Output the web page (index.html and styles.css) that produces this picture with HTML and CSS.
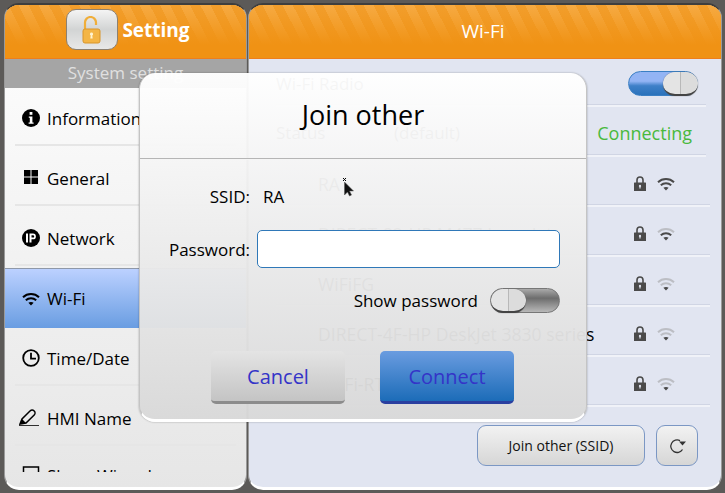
FILE: index.html
```html
<!DOCTYPE html>
<html lang="en">
<head>
<meta charset="utf-8">
<title>Setting - Wi-Fi</title>
<link rel="stylesheet" href="styles.css">
</head>
<body>
<svg class="defs" width="0" height="0" aria-hidden="true">
  <symbol id="wifi" viewBox="0 0 18 14">
    <path d="M1 5.200C5.600 1 12.400 1 17 5.200" fill="none" stroke="currentColor" stroke-width="2"/>
    <path d="M3.800 8.200C6.800 5.600 11.200 5.600 14.200 8.200" fill="none" stroke="currentColor" stroke-width="2"/>
    <path d="M9 13.400 6.400 10.700C7.900 9.700 10.100 9.700 11.600 10.700Z" fill="currentColor"/>
  </symbol>
  <symbol id="wifi2" viewBox="0 0 18 14">
    <path d="M1 5.200C5.600 1 12.400 1 17 5.200" fill="none" stroke="#bcbec4" stroke-width="2"/>
    <path d="M3.800 8.200C6.800 5.600 11.200 5.600 14.200 8.200" fill="none" stroke="#4a4a4a" stroke-width="2"/>
    <path d="M9 13.400 6.400 10.700C7.900 9.700 10.100 9.700 11.600 10.700Z" fill="#4a4a4a"/>
  </symbol>
  <symbol id="wifi1" viewBox="0 0 18 14">
    <path d="M1 5.200C5.600 1 12.400 1 17 5.200" fill="none" stroke="#bcbec4" stroke-width="2"/>
    <path d="M3.800 8.200C6.800 5.600 11.200 5.600 14.200 8.200" fill="none" stroke="#bcbec4" stroke-width="2"/>
    <path d="M9 13.400 6.400 10.700C7.900 9.700 10.100 9.700 11.600 10.700Z" fill="#4a4a4a"/>
  </symbol>
  <symbol id="lock" viewBox="0 0 12 15">
    <path d="M3 7V4a3 3 0 0 1 6 0v3" fill="none" stroke="currentColor" stroke-width="1.600"/>
    <path fill-rule="evenodd" d="M.5 6.500h11a.5.5 0 0 1 .5.5v7.500a.5.5 0 0 1-.5.5H.5a.5.5 0 0 1-.5-.5V7a.5.5 0 0 1 .5-.5ZM6 8.800a1.200 1.200 0 0 0-.6 2.200v1.600h1.200V11A1.200 1.200 0 0 0 6 8.800Z" fill="currentColor"/>
  </symbol>
</svg>
<main class="app">
  <section class="panel side">
    <header class="bar bar-side">
      <span class="lock-btn">
        <svg width="20" height="28" viewBox="0 0 20 28">
          <path d="M3 13V6.500a5.500 5.500 0 0 1 11 0V9" fill="none" stroke="#f0ae3a" stroke-width="2.200"/>
          <rect x="1" y="13" width="17" height="14" rx="2" fill="#f4b545" stroke="#d9952a"/>
          <path d="M9.500 16.500a1.600 1.600 0 0 0-.8 3l-.4 3h2.400l-.4-3a1.600 1.600 0 0 0-.8-3Z" fill="#fff3d0"/>
        </svg>
      </span>
      <h1 class="bar-title bold">Setting</h1>
    </header>
    <div class="subhead">System setting</div>
    <nav class="menu">
      <a class="item"><svg class="ico" viewBox="0 0 18 18"><circle cx="9" cy="9" r="9"/><rect x="7.600" y="3" width="2.800" height="2.800" fill="#fff"/><path d="M6.800 7.500h3.600v6h1.200v1.300H6.600v-1.300h1.200V8.800h-1Z" fill="#fff"/></svg>Information</a>
      <a class="item"><svg class="ico" viewBox="0 0 18 18"><rect x="2" y="1" width="6.500" height="6.500"/><rect x="9.500" y="1" width="6.500" height="6.500"/><rect x="2" y="8.500" width="6.500" height="6.500"/><rect x="9.500" y="8.500" width="6.500" height="6.500"/></svg>General</a>
      <a class="item"><svg class="ico" viewBox="0 0 18 18"><circle cx="9" cy="9" r="9"/><rect x="4" y="4.500" width="2" height="9" fill="#fff"/><path d="M7.500 13.500v-9H11a2.800 2.800 0 0 1 0 5.800H9.500v3.200Z M9.500 6.200v2.400H11a1.200 1.200 0 0 0 0-2.400Z" fill="#fff" fill-rule="evenodd"/></svg>Network</a>
      <a class="item item-on"><svg class="ico"><use href="#wifi"/></svg>Wi-Fi</a>
      <a class="item"><svg class="ico" viewBox="0 0 18 18"><circle cx="9" cy="9" r="7.800" fill="none" stroke="#000" stroke-width="1.800"/><path d="M9 3.800V9.600H14" fill="none" stroke="#000" stroke-width="1.800"/></svg>Time/Date</a>
      <a class="item"><svg class="ico ico-pen" viewBox="0 0 21 18"><path d="M1 15 3 10 11 2c1.300-1.300 3.200-1 4.200 0s1.200 2.800 0 4L7 14Z" fill="none" stroke="#000" stroke-width="1.500"/><path d="M1 15 3 10l4 4Z"/><path d="M0 16.500h20" stroke="#000" stroke-width=".8"/></svg>HMI Name</a>
      <a class="item item-last"><svg class="ico" viewBox="0 0 18 18"><rect x="1.500" y="1" width="15" height="15" fill="none" stroke="#000" stroke-width="1.500"/></svg>Share Wizard</a>
    </nav>
  </section>

  <section class="panel main">
    <header class="bar bar-main"><h2 class="bar-title">Wi-Fi</h2></header>
    <div class="rows">
      <div class="row row-first"><span class="row-name">Wi-Fi Radio</span><span class="toggle toggle-on"><i class="knob"></i></span></div>
      <div class="row row-second"><span class="row-name status">Status</span><span class="row-value">(default)</span><span class="connecting">Connecting</span></div>
      <div class="row net"><span class="row-ssid">RA</span><svg class="i-lock"><use href="#lock"/></svg><svg class="i-wifi"><use href="#wifi"/></svg></div>
      <div class="row net"><span class="row-ssid">DIRECT-82-HP M477 LaserJet</span><svg class="i-lock"><use href="#lock"/></svg><svg class="i-wifi"><use href="#wifi2"/></svg></div>
      <div class="row net"><span class="row-ssid">WiFiFG</span><svg class="i-lock"><use href="#lock"/></svg><svg class="i-wifi"><use href="#wifi1"/></svg></div>
      <div class="row net"><span class="row-ssid">DIRECT-4F-HP DeskJet 3830 series</span><svg class="i-lock"><use href="#lock"/></svg><svg class="i-wifi"><use href="#wifi1"/></svg></div>
      <div class="row net"><span class="row-ssid">Wi-Fi-RT</span><svg class="i-lock"><use href="#lock"/></svg><svg class="i-wifi"><use href="#wifi1"/></svg></div>
    </div>
    <footer class="actions">
      <button class="btn-join">Join other (SSID)</button>
      <button class="btn-refresh" aria-label="Refresh">
        <svg width="18" height="18" viewBox="0 0 18 18"><path d="M14.500 12.500A6.300 6.300 0 1 1 12 3.600" fill="none" stroke="#333" stroke-width="1.300"/><path d="M11 4.500h7l-3.500 4Z" fill="#333"/></svg>
      </button>
    </footer>
  </section>
</main>

<div class="modal" role="dialog">
  <h3 class="modal-title">Join other</h3>
  <div class="modal-body">
    <div class="field field-ssid"><span class="lab">SSID:</span><span class="val">RA</span></div>
    <div class="field field-pass"><span class="lab lab-pass">Password:</span><input class="pass" type="password"></div>
    <div class="show"><span>Show password</span><span class="toggle toggle-off"><i class="knob"></i></span></div>
    <div class="modal-btns">
      <button class="mbtn mbtn-cancel">Cancel</button>
      <button class="mbtn mbtn-connect">Connect</button>
    </div>
  </div>
</div>

<svg class="cursor" width="14" height="20" viewBox="0 0 14 20" aria-hidden="true">
  <path d="M2 1 5 4M5 1 2 4" stroke="#000" stroke-width="1"/>
  <path d="M3.500 5v13l3-3 2 4 2-1-2-4h4Z" fill="#111" stroke="#555" stroke-width=".5"/>
</svg>
</body>
</html>
```
FILE: styles.css
```css
* { box-sizing: border-box; }
html, body { margin: 0; height: 100%; }
body {
  width: 725px;
  height: 493px;
  overflow: hidden;
  position: relative;
  background: #5c5a58;
  font-family: "Open Sans", "Noto Sans", sans-serif;
  color: #000;
}
.defs { position: absolute; }
.app {
  display: flex;
  gap: 1px;
  height: 100%;
  padding: 3px 3px 3px 4px;
}
.panel {
  display: flex;
  flex-direction: column;
  border-radius: 15px;
  overflow: hidden;
  border-top: 2px solid #3e3e3e;
  border-bottom: 3px solid #fff;
  border-left: 1px solid #9a9a9a;
  border-right: 1px solid #9a9a9a;
}
.side { width: 243px; background: linear-gradient(#fff, #e6e6e6); }
.main { flex: 1; background: #e1e5f1; }
.bar {
  height: 54px;
  flex: none;
  display: flex;
  align-items: center;
  justify-content: center;
  gap: 4px;
  color: #fff;
  border-bottom: 1px solid #ee7f1c;
  background:
    linear-gradient(rgba(240,146,20,0) 0, #f09214 40px),
    repeating-linear-gradient(63deg, #f6aa42 0 9px, #f29e2c 9px 18px);
  background-color: #f09214;
}
.bar-side { padding: 0 0 4px 5px; }
.bar-main { padding: 0 4px 2px 0; }
.bar-title { margin: 0; font-size: 19px; line-height: 26px; font-weight: 400; }
.bold { font-weight: 700; }
.lock-btn {
  width: 52px;
  height: 41px;
  display: flex;
  align-items: center;
  justify-content: center;
  border-radius: 10px;
  border: 1px solid #8d8171;
  background: linear-gradient(#f4f4f4, #d2d4d4 50%, #e8e8e8);
}
.subhead {
  height: 29px;
  flex: none;
  text-align: center;
  line-height: 28px;
  font-size: 17px;
  color: #e0e0e0;
  background: #a5a5a5;
}
.menu { display: flex; flex-direction: column; height: 384px; flex: none; overflow: hidden; }
.item {
  position: relative;
  flex: none;
  height: 60px;
  padding-left: 17px;
  display: flex;
  align-items: center;
  gap: 7px;
  font-size: 17px;
}
.item::after {
  content: "";
  position: absolute;
  left: 10px;
  right: 10px;
  bottom: 2px;
  height: 2px;
  background: #e6e6e6;
}
.ico { width: 18px; height: 18px; flex: none; color: #000; }
.ico-pen { width: 21px; margin-left: -3px; }
.item-on {
  border-top: 1px solid #8f98a8;
  background: linear-gradient(#bcd1ff, #699de2);
}
.item-on::after { display: none; }
.item-last { margin-top: -3px; }
.rows { display: flex; flex-direction: column; padding-right: 11px; flex: none; }
.row {
  height: 50px;
  margin-left: 27px;
  padding-top: 5px;
  display: flex;
  align-items: center;
  font-size: 17px;
  border-bottom: 2px solid #f0f2f8;
  box-shadow: inset 0 -1px 0 #d0d5e4;
  flex: none;
}
.row-first { height: 48px; margin-right: 4px; padding-top: 2px; }
.row-second { margin-right: 4px; padding-top: 3px; }
.row-name { flex: none; width: 118px; }
.row-value { flex: 1; }
.connecting { color: #49b93d; font-size: 18px; margin-right: 14px; }
.toggle {
  display: block;
  position: relative;
  width: 70px;
  height: 25px;
  border-radius: 13px;
  flex: none;
}
.row-first .toggle { margin-left: auto; margin-right: 8px; }
.toggle-on { background: linear-gradient(#93b4f4 0 40%, #3f80c8 60%, #2a72bb); border: 1px solid #3a7fc4; }
.toggle-off { background: linear-gradient(#aaa, #6d6d6d 40%, #b8b8b8); border: 1px solid #777; }
.knob {
  position: absolute;
  top: 0;
  bottom: -1px;
  width: 35px;
  border-radius: 13px;
  background: linear-gradient(90deg, #e4e4e4 49%, #b8b8b8 49%, #b8b8b8 51%, #dcdcdc 51%);
  border-bottom: 2px solid #444;
  box-shadow: 0 0 1px #555;
}
.toggle-on .knob { right: -1px; }
.toggle-off .knob { left: 0; }
.net { padding-left: 42px; }
.row-ssid { flex: 1; white-space: nowrap; font-size: 17.6px; }
.i-lock { width: 12px; height: 15px; color: #4a4a4a; margin-right: 11px; flex: none; }
.i-wifi { width: 18px; height: 14px; color: #4a4a4a; margin-right: 35px; flex: none; }
.actions { display: flex; justify-content: flex-end; gap: 11px; padding: 18px 23px 0 0; }
.btn-join, .btn-refresh {
  height: 41px;
  border-radius: 9px;
  border: 1px solid #7b97c4;
  background: linear-gradient(#f2f2f2, #d6d6d6);
  font: 14px "Open Sans", "Noto Sans", sans-serif;
  color: #111;
  padding: 0;
}
.btn-join { width: 168px; }
.btn-refresh { width: 42px; display: flex; align-items: center; justify-content: center; }

.modal {
  position: absolute;
  left: 139px;
  top: 73px;
  width: 448px;
  height: 349px;
  border-radius: 16px;
  border-bottom: 3px solid #fff;
  border-right: 1px solid #c4c4c4;
  border-left: 1px solid #c4c4c4;
  box-shadow: 0 0 2px rgba(0,0,0,.35);
  background: linear-gradient(rgba(255,255,255,.965), rgba(217,217,217,.965));
}
.modal-title {
  margin: 0;
  height: 86px;
  text-align: center;
  font-size: 27px;
  font-weight: 400;
  line-height: 84px;
  border-bottom: 1px solid #b5b5b5;
  box-shadow: 0 1px 0 #f5f5f5;
}
.modal-body { display: flex; flex-direction: column; }
.field { display: flex; align-items: center; font-size: 17px; }
.field-ssid { height: 44px; margin-top: 15px; }
.field-pass { height: 38px; margin-top: 12px; }
.lab { width: 110px; text-align: right; flex: none; }
.val { margin-left: 13px; }
.pass {
  width: 303px;
  height: 38px;
  margin-left: 7px;
  border-radius: 5px;
  border: 1px solid #2f78b8;
  background: #fff;
}
.show {
  display: flex;
  align-items: center;
  justify-content: flex-end;
  gap: 12px;
  margin-top: 20px;
  padding-right: 26px;
  font-size: 17px;
  height: 25px;
}
.modal-btns { display: flex; gap: 35px; padding: 38px 0 0 71px; }
.mbtn {
  width: 134px;
  height: 53px;
  border-radius: 5px;
  border: none;
  font: 20px "Open Sans", "Noto Sans", sans-serif;
  color: #3434c8;
  padding: 0;
}
.mbtn-cancel { background: linear-gradient(#e4e4e4, #c4c4c4); border-bottom: 3px solid #8c8c8c; }
.mbtn-connect { background: linear-gradient(#6a9ce0, #1c6cb8); border-bottom: 3px solid #2a3fa0; }
.cursor { position: absolute; left: 341px; top: 177px; }
```
